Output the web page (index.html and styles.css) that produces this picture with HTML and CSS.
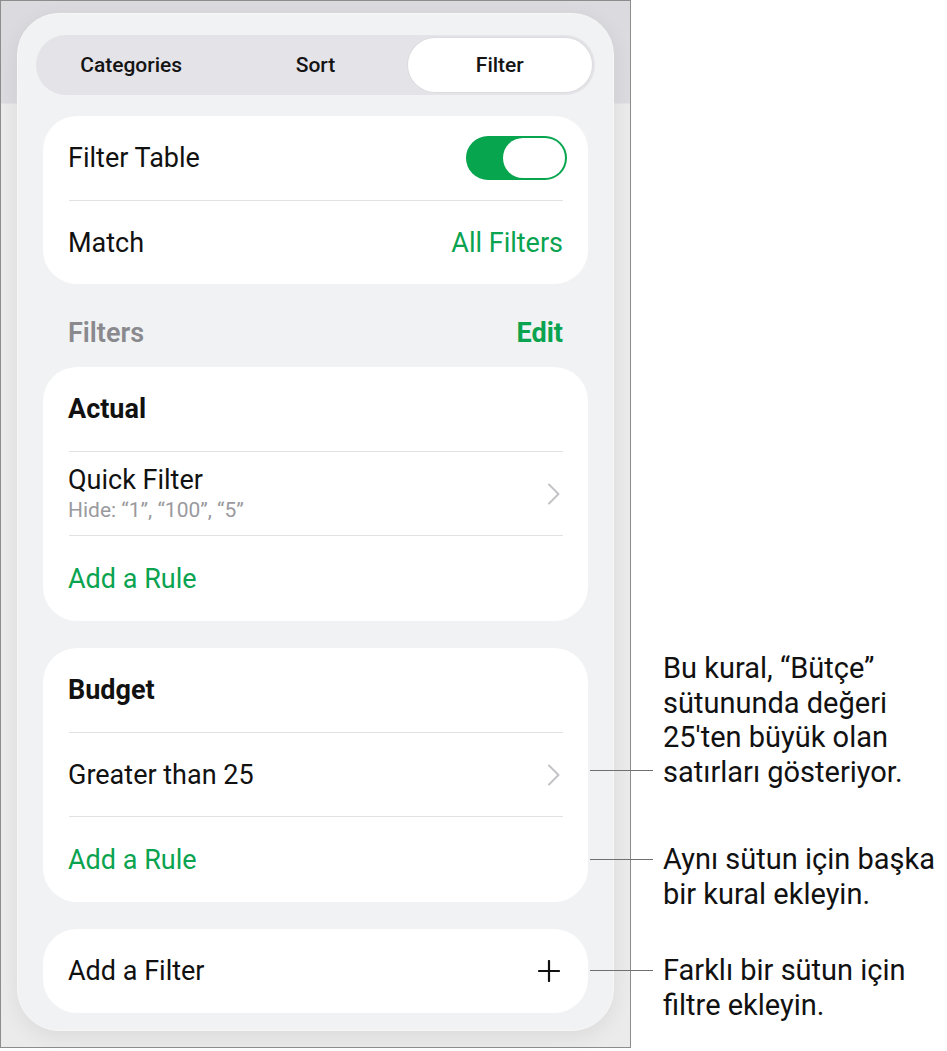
FILE: index.html
```html
<!DOCTYPE html>
<html lang="en">
<head>
<meta charset="utf-8">
<title>Filter</title>
<link rel="stylesheet" href="styles.css">
</head>
<body>
<div class="page">
  <div class="frame">
    <div class="panel">
      <div class="segmented">
        <div class="seg">Categories</div>
        <div class="seg">Sort</div>
        <div class="seg seg-active">Filter</div>
      </div>

      <div class="card">
        <div class="row">
          <span class="label">Filter Table</span>
          <span class="toggle"><span class="knob"></span></span>
        </div>
        <div class="row row-div">
          <span class="label">Match</span>
          <span class="value-green">All Filters</span>
        </div>
      </div>

      <div class="section-header">
        <span class="section-title">Filters</span>
        <span class="section-action">Edit</span>
      </div>

      <div class="card card-first">
        <div class="row"><span class="label bold">Actual</span></div>
        <div class="row row-div">
          <div class="stack">
            <span class="label">Quick Filter</span>
            <span class="sub">Hide: “1”, “100”, “5”</span>
          </div>
          <svg class="chev" width="14" height="22" viewBox="0 0 14 22"><path d="M2 1.5 L11.5 11 L2 20.5" fill="none" stroke="#c3c3c7" stroke-width="2" stroke-linecap="round" stroke-linejoin="round"/></svg>
        </div>
        <div class="row row-div row-last"><span class="label green">Add a Rule</span></div>
      </div>

      <div class="card card-gap">
        <div class="row"><span class="label bold">Budget</span></div>
        <div class="row row-div">
          <span class="label">Greater than 25</span>
          <svg class="chev" width="14" height="22" viewBox="0 0 14 22"><path d="M2 1.5 L11.5 11 L2 20.5" fill="none" stroke="#c3c3c7" stroke-width="2" stroke-linecap="round" stroke-linejoin="round"/></svg>
        </div>
        <div class="row row-div row-last"><span class="label green">Add a Rule</span></div>
      </div>

      <div class="card card-gap">
        <div class="row">
          <span class="label">Add a Filter</span>
          <svg class="plus" width="22" height="22" viewBox="0 0 22 22"><path d="M11 1 V21 M1 11 H21" fill="none" stroke="#111" stroke-width="2.2" stroke-linecap="round"/></svg>
        </div>
      </div>
    </div>
  </div>

  <div class="callout callout-1 leader-bottom">
    <span class="leader"></span>
    <p class="note">Bu kural, “Bütçe”<br>sütununda değeri<br>25′ten büyük olan<br>satırları gösteriyor.</p>
  </div>
  <div class="callout callout-2 leader-top">
    <span class="leader"></span>
    <p class="note">Aynı sütun için başka<br>bir kural ekleyin.</p>
  </div>
  <div class="callout callout-3 leader-top">
    <span class="leader"></span>
    <p class="note">Farklı bir sütun için<br>filtre ekleyin.</p>
  </div>
</div>
</body>
</html>
```

FILE: styles.css
```css
* { box-sizing: border-box; }
html, body {
  margin: 0;
  padding: 0;
  background: #ffffff;
}
body {
  font-family: Roboto, "Liberation Sans", Arial, sans-serif;
  color: #111;
}
.page {
  position: relative;
  width: 947px;
  height: 1051px;
}
.frame {
  width: 631px;
  height: 1048px;
  border: 1px solid #8d8d8d;
  background: linear-gradient(to bottom, #dbdbdf 0, #dcdce0 102px, #ebebec 103px, #ebebec 100%);
  padding: 12px 16px 0 16px;
}
.panel {
  width: 597px;
  height: 1018px;
  background: #f1f2f3;
  border: 1px solid #f7f7f8;
  border-radius: 42px;
  box-shadow: 0 6px 22px rgba(0, 0, 0, 0.07);
  padding: 21px 18px 0 18px;
}
.segmented {
  height: 60px;
  background: #e3e3e8;
  border-radius: 30px;
  padding: 3px;
  display: grid;
  grid-template-columns: 1fr 1fr 1fr;
}
.seg {
  display: flex;
  align-items: center;
  justify-content: center;
  font-size: 21px;
  font-weight: 500;
  color: #141414;
  border-radius: 27px;
}
.seg-active {
  background: #ffffff;
  box-shadow: 0 0 0 1px #dcdce0;
}
.card {
  margin: 21px 7px 0 7px;
  background: #ffffff;
  border-radius: 34px;
  padding: 0 25px 0 25px;
}
.card-first { margin-top: 0; }
.card-gap { margin-top: 27px; }
.row {
  height: 84px;
  display: flex;
  align-items: center;
  justify-content: space-between;
}
.row-div { border-top: 1px solid #e2e2e4; margin-left: 1px; }
.row-last { height: 86px; }
.label {
  font-size: 27px;
  font-weight: 400;
  color: #111;
}
.row-div .label, .row-div .stack { margin-left: -1px; }
.bold { font-weight: 700; }
.green { color: #0aa34f; }
.value-green {
  font-size: 27px;
  color: #0aa34f;
}
.stack {
  display: flex;
  flex-direction: column;
  line-height: 30px;
  padding-top: 2px;
}
.stack .label { margin-left: 0; }
.sub {
  font-size: 21px;
  line-height: 30px;
  color: #9a9a9e;
}
.chev { margin-right: 2px; }
.plus { margin-right: 3px; }
.toggle {
  width: 101px;
  height: 44px;
  border-radius: 22px;
  background: #06a54e;
  display: flex;
  justify-content: flex-end;
  align-items: center;
  padding: 2px;
  margin-right: -4px;
}
.knob {
  width: 62px;
  height: 40px;
  border-radius: 20px;
  background: #ffffff;
}
.section-header {
  display: flex;
  justify-content: space-between;
  align-items: center;
  padding: 34px 32px 19px 32px;
  height: 83px;
}
.section-title {
  font-size: 27px;
  font-weight: 600;
  color: #8a8a8e;
}
.section-action {
  font-size: 27px;
  font-weight: 700;
  color: #0aa34f;
}
.callout {
  position: absolute;
  left: 590px;
  display: flex;
  gap: 10px;
}
.callout-1 { top: 651px; }
.callout-2 { top: 842px; }
.callout-3 { top: 953px; }
.leader {
  width: 63px;
  height: 1px;
  background: #707070;
  flex: none;
}
.leader-bottom .leader { align-self: flex-end; margin-bottom: 18px; }
.leader-top .leader { align-self: flex-start; margin-top: 17px; }
.note {
  margin: 0;
  font-size: 29px;
  line-height: 34.6px;
  color: #111;
  white-space: nowrap;
}
```
